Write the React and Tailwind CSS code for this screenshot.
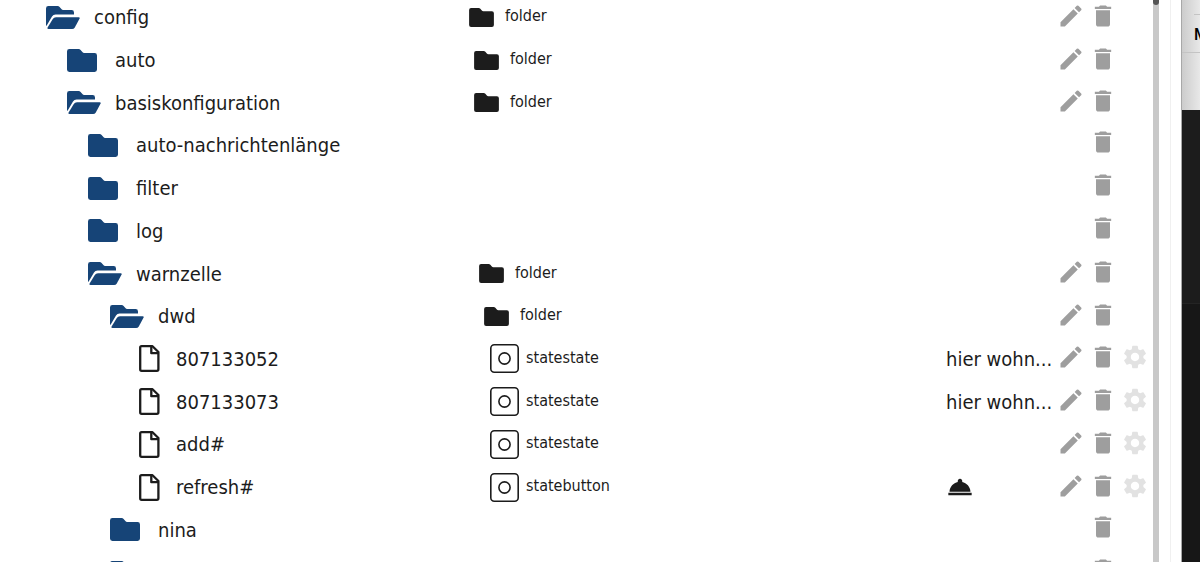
import { MdDelete, MdEdit, MdRoomService, MdSettings } from 'react-icons/md';

const rows = [
  { name: 'config', depth: 0, open: true, type: 'folder' },
  { name: 'auto', depth: 1, type: 'folder' },
  { name: 'basiskonfiguration', depth: 1, open: true, type: 'folder' },
  { name: 'auto-nachrichtenlänge', depth: 2 },
  { name: 'filter', depth: 2 },
  { name: 'log', depth: 2 },
  { name: 'warnzelle', depth: 2, open: true, type: 'folder' },
  { name: 'dwd', depth: 3, open: true, type: 'folder' },
  { name: '807133052', depth: 4, state: true, type: 'statestate', value: 'hier wohn...' },
  { name: '807133073', depth: 4, state: true, type: 'statestate', value: 'hier wohn...' },
  { name: 'add#', depth: 4, state: true, type: 'statestate' },
  { name: 'refresh#', depth: 4, state: true, type: 'statebutton', button: true },
  { name: 'nina', depth: 3 },
  { name: '', depth: 3 },
];

const nameIndent = ['pl-[46px]', 'pl-[67px]', 'pl-[88px]', 'pl-[110px]', 'pl-[139px]'];
const typeIndent = ['pl-0', 'pl-[5px]', 'pl-[10px]', 'pl-[15px]', 'pl-[21px]'];

const FolderIcon = ({ className }) => (
  <svg viewBox="0 0 30 23" className={className} fill="currentColor" aria-hidden="true">
    <path d="M2.4 0H11.6Q12.8 0 13.6.9L15.4 3.1Q16 4 17.2 4H27.6Q30 4 30 6.4V20.6Q30 23 27.6 23H2.4Q0 23 0 20.6V2.4Q0 0 2.4 0Z" />
  </svg>
);

const FolderOpenIcon = ({ className }) => (
  <svg viewBox="0 0 34 23" className={className} fill="currentColor" aria-hidden="true">
    <path d="M2.4 0H11.6Q12.8 0 13.6.9L15.4 3.1Q16 4 17.2 4H25.6Q28 4 28 6.4V8.6H9.6Q7.2 8.6 6 10.6L.4 20Q0 19.6 0 19V2.4Q0 0 2.4 0Z" />
    <path d="M10 11.3H32.6Q34.2 11.3 33.6 12.6L28.8 21.4Q27.9 23 26 23H2.6Q.8 23 1.6 21.5L6.8 12.9Q7.8 11.3 10 11.3Z" />
  </svg>
);

const FileIcon = () => (
  <svg viewBox="0 0 21 27" className="h-[27px] w-[21px] shrink-0" fill="none" stroke="currentColor" strokeWidth="2.3" strokeLinejoin="round" aria-hidden="true">
    <path d="M2.6 1.2H13.5L19.4 7V24.3Q19.4 25.8 17.9 25.8H2.6Q1.2 25.8 1.2 24.3V2.6Q1.2 1.2 2.6 1.2Z" />
    <path d="M12.3 1.5V8.2H19" />
  </svg>
);

const StateIcon = () => (
  <svg viewBox="0 0 29 29" className="size-[29px] shrink-0" fill="none" stroke="currentColor" strokeWidth="1.6" aria-hidden="true">
    <rect x="0.8" y="0.8" width="27.4" height="27.4" rx="3.5" />
    <circle cx="14.5" cy="14.5" r="5.6" />
  </svg>
);

const IconButton = ({ label, className, children }) => (
  <button type="button" aria-label={label} className={`block cursor-pointer ${className || ''}`}>
    {children}
  </button>
);

const Row = ({ row }) => (
  <tr className="h-[42px]">
    <td className="p-0">
      <div className={`flex items-center ${nameIndent[row.depth]}`}>
        {row.state ? (
          <>
            <FileIcon />
            <span className="pl-4">{row.name}</span>
          </>
        ) : (
          <>
            <span className="w-12 shrink-0 text-[#164477]">
              {row.open ? (
                <FolderOpenIcon className="h-[23px] w-[34px]" />
              ) : (
                <FolderIcon className="h-[23px] w-[30px]" />
              )}
            </span>
            <span>{row.name}</span>
          </>
        )}
      </div>
    </td>
    <td className="p-0 text-base">
      {row.type && (
        <div className={`flex items-center ${typeIndent[row.depth]}`}>
          {row.state ? (
            <>
              <StateIcon />
              <span className="pb-0.5 pl-[7px]">{row.type}</span>
            </>
          ) : (
            <>
              <FolderIcon className="h-[19px] w-[25px] shrink-0" />
              <span className="pb-0.5 pl-[11px]">{row.type}</span>
            </>
          )}
        </div>
      )}
    </td>
    <td className="p-0 pl-px whitespace-nowrap">
      {row.value}
      {row.button && (
        <IconButton label="Press" className="text-[28px]">
          <MdRoomService />
        </IconButton>
      )}
    </td>
    <td className="p-0">
      <div className={`flex items-center gap-1 text-[28px] text-[#9e9e9e] ${row.type ? 'pb-[3px]' : 'pb-1.5'}`}>
        <div className="w-7">
          {row.type && (
            <IconButton label="Edit">
              <MdEdit />
            </IconButton>
          )}
        </div>
        <IconButton label="Delete">
          <MdDelete />
        </IconButton>
        {row.state && (
          <IconButton label="Settings" className="text-[#e2e2e2]">
            <MdSettings />
          </IconButton>
        )}
      </div>
    </td>
  </tr>
);

const App = () => {
  return (
    <div className="flex h-screen overflow-hidden bg-white font-['DejaVu_Sans_Condensed','DejaVu_Sans',sans-serif] text-xl text-[#1c1c1c]">
      <main className="min-w-0 flex-1 overflow-hidden">
        <table className="-mt-1 h-[598px] w-full table-fixed border-collapse">
          <colgroup>
            <col className="w-[469px]" />
            <col />
            <col className="w-[112px]" />
            <col className="w-[96px]" />
          </colgroup>
          <tbody>
            {rows.map((row, i) => (
              <Row key={i} row={row} />
            ))}
          </tbody>
        </table>
      </main>

      {/* Scrollbar */}
      <div className="w-[6px] bg-[#c8c8c8]">
        <div className="h-[5px] rounded-b-full bg-[#555555]"></div>
      </div>
      <div className="w-3 border-r border-[#f0f0f0]"></div>
      <div className="w-[10px]"></div>

      {/* Window behind */}
      <aside className="flex w-[19px] flex-col overflow-hidden border-l border-[#a8a8a8] bg-[#171717]">
        <div className="bg-linear-to-r from-[#cccccc] to-[#e8e8e8]">
          <div className="h-[53px] border-b border-[#c4c4c4] pl-3">
            <div className="h-[15px] border-b border-[#c4c4c4]"></div>
            <div className="pt-[10px] font-['Roboto',sans-serif] text-base leading-5 font-medium text-black">M</div>
          </div>
          <div className="h-[57px]"></div>
        </div>
        <div className="h-[194px] border-b border-[#242424] bg-[#1c1c1c]"></div>
      </aside>
    </div>
  );
};

export default App;
